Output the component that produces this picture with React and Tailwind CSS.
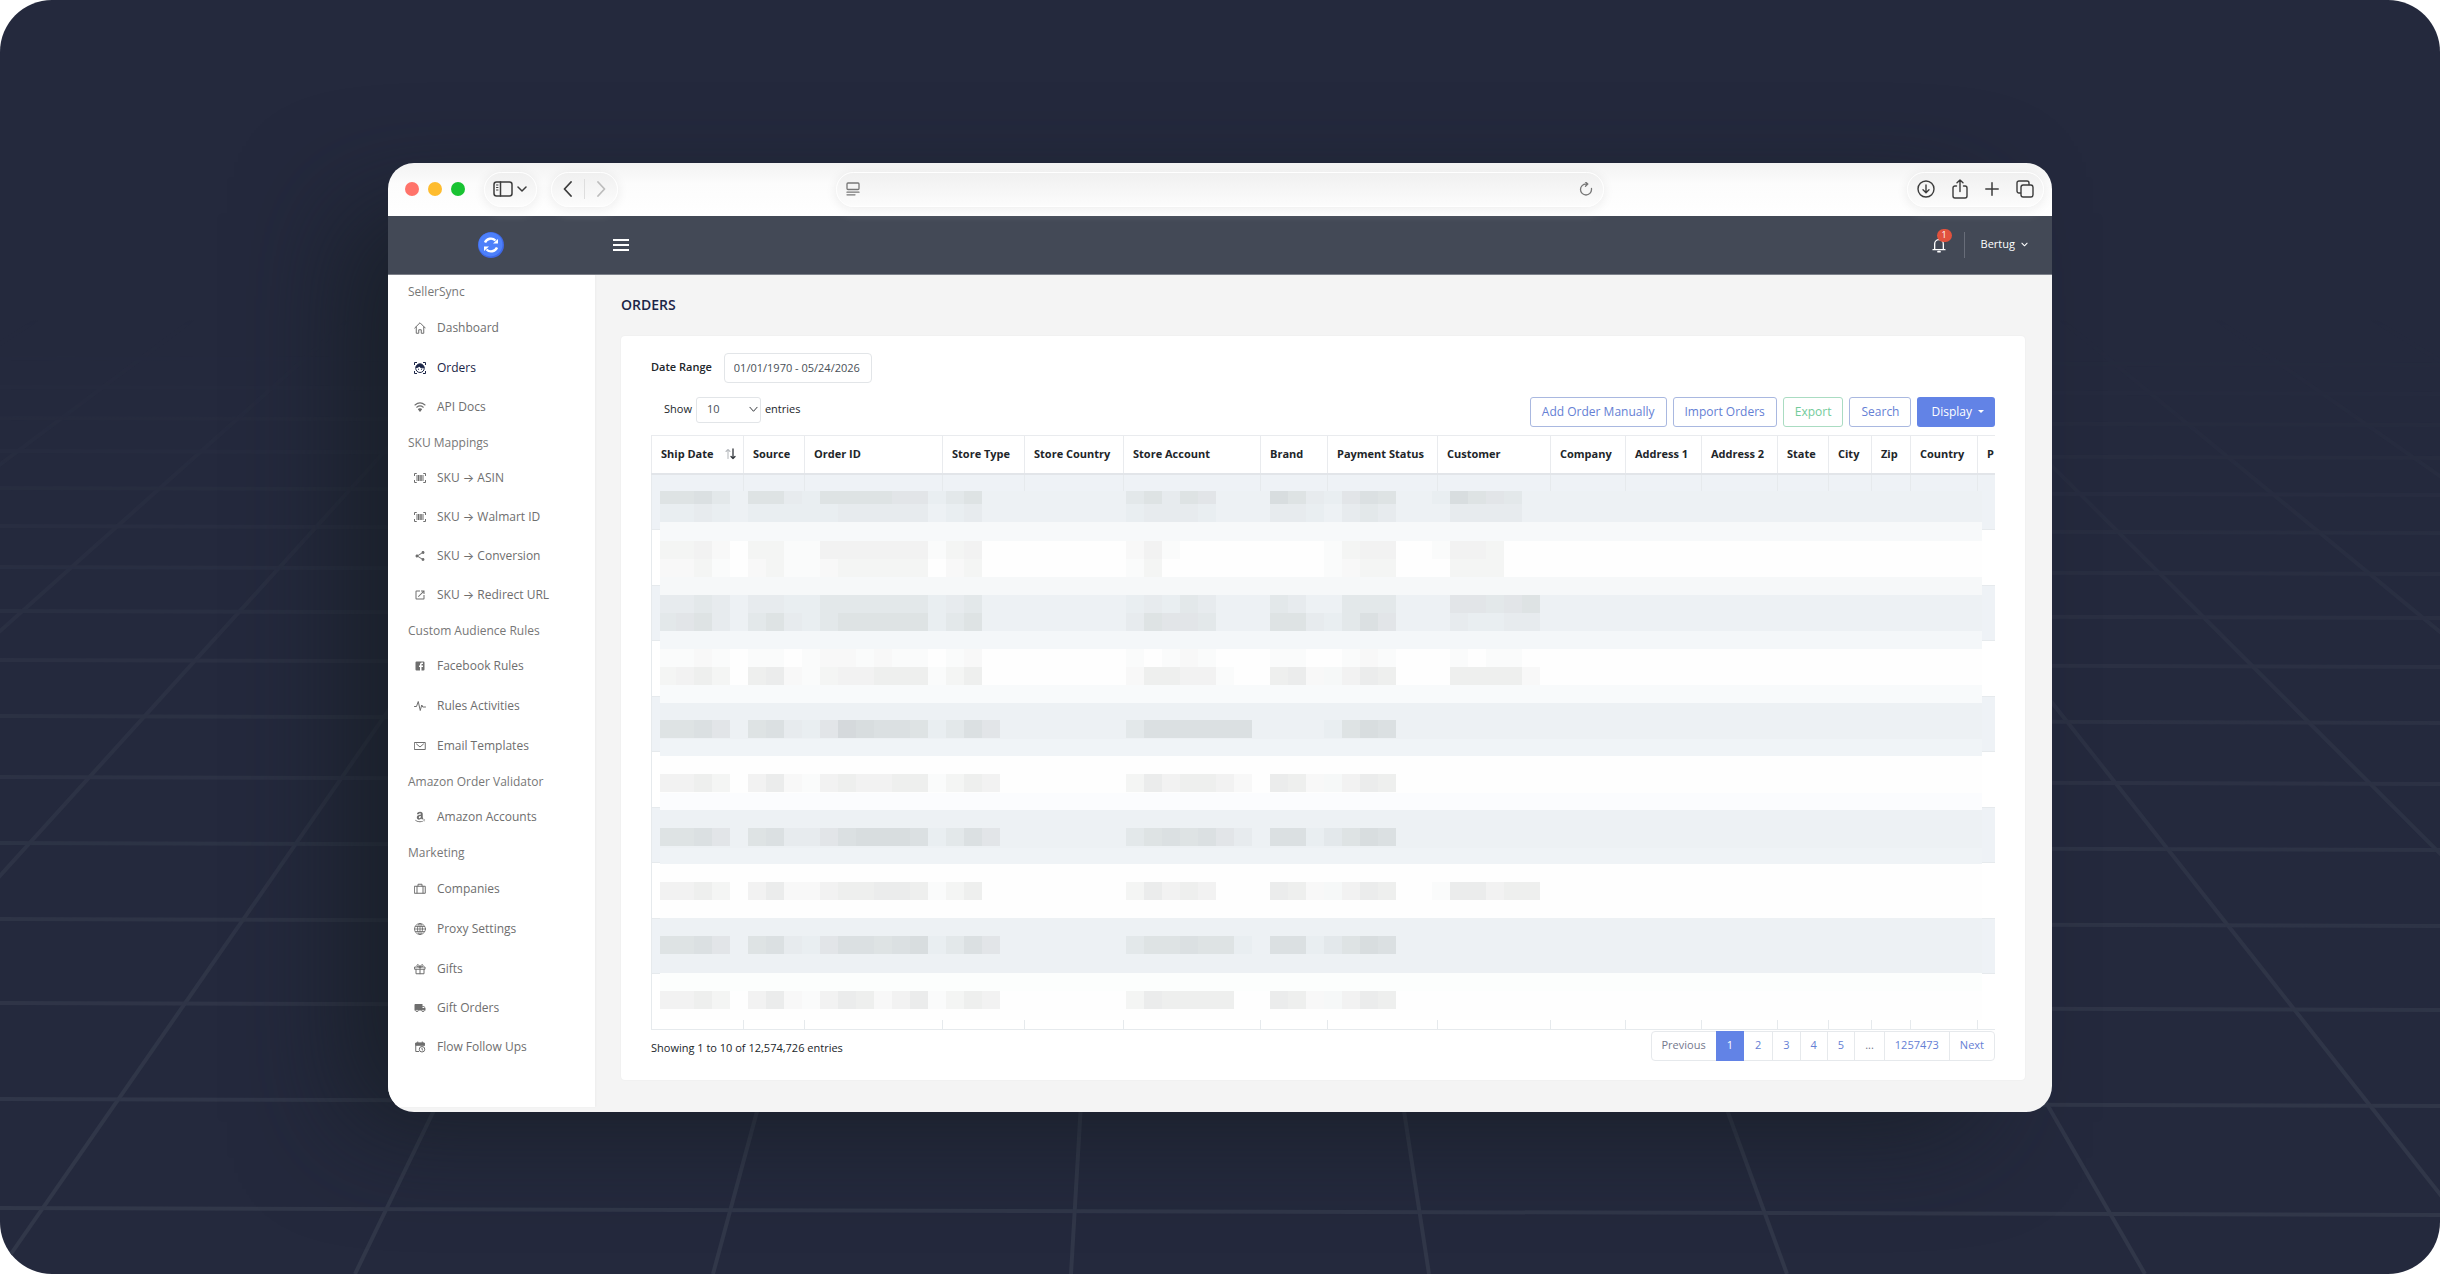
import { MdShare, MdOpenInNew, MdLocalShipping } from "react-icons/md";
import { FaAmazon } from "react-icons/fa";

function Icon({ children, className = "size-3", box = "0 0 24 24", width = 2, ...rest }) {
  return (
    <svg viewBox={box} className={className} fill="none" stroke="currentColor" strokeWidth={width} strokeLinecap="round" strokeLinejoin="round" aria-hidden="true" {...rest}>
      {children}
    </svg>
  );
}

/* Sidebar icons */
const Home = () => (
  <Icon>
    <path d="M1.500 12 12 1.500 22.500 12M4.500 10v12.500h5v-7h5v7h5V10" />
  </Icon>
);
const Face = () => (
  <Icon strokeLinecap="butt">
    <path d="M1 6V1h5M18 1h5v5M23 18v5h-5M6 23H1v-5" />
    <circle cx="12" cy="12.500" r="8.500" />
    <path d="M4 11C7 11 9 10 10.500 8.500c2 2.500 5 3.500 9.500 3C19 7 16 4 12 4S4.800 7 4 11Z" fill="currentColor" />
    <path d="M9 13.500v2M15 13.500v2" />
  </Icon>
);
const Wifi = () => (
  <Icon width={2.2}>
    <path d="M2 8C8 3 16 3 22 8M5.500 12.500c4-3.300 9-3.300 13 0" />
    <path d="m9 16.500 3 4 3-4c-2-1.300-4-1.300-6 0Z" fill="currentColor" />
  </Icon>
);
const Barcode = () => (
  <Icon strokeLinecap="butt">
    <path d="M5.500 3H1v5M18.500 3H23v5M23 16v5h-4.500M5.500 21H1v-5" />
    <path d="M6 6v12M18 6v12" />
    <path d="M9.500 6v12M14 6v12" strokeWidth="3" />
  </Icon>
);
const Facebook = () => (
  <Icon fill="currentColor" stroke="none">
    <path d="M5 3h14a2 2 0 0 1 2 2v14a2 2 0 0 1-2 2H5a2 2 0 0 1-2-2V5a2 2 0 0 1 2-2m13 2h-2.500A3.500 3.500 0 0 0 12 8.500V11h-2v3h2v7h3v-7h3v-3h-3V9a1 1 0 0 1 1-1h2V5Z" />
  </Icon>
);
const Pulse = () => (
  <Icon>
    <path d="M1 13h4l3.500-10 4 18 3-11 2 4H23" />
  </Icon>
);
const Mail = () => (
  <Icon>
    <path d="M1.500 5h21v14h-21zM5 8l7 6 7-6" />
  </Icon>
);
const Suitcase = () => (
  <Icon>
    <path d="M1.500 6.500h21v14h-21zM8 6V2.500h8V6M6 7v13M18 7v13" />
  </Icon>
);
const Globe = () => (
  <Icon width={1.7}>
    <circle cx="12" cy="12" r="11" />
    <ellipse cx="12" cy="12" rx="5" ry="11" />
    <path d="M1 12h22M12 1v22M3 7h18M3 17h18" />
  </Icon>
);
const Gift = () => (
  <Icon>
    <path d="M2 8h20v4.500H2zM4 12.500v9h16v-9M12 8v13.500M12 8C10 2 5.500 2 6 5.500 6.200 7 8 8 12 8Zm0 0c2-6 6.500-6 6-2.500C17.800 7 16 8 12 8Z" />
  </Icon>
);
const CalendarClock = () => (
  <Icon strokeLinecap="butt">
    <path d="M10 21H3.500V4.500h17V10M7.500 1v4M16.500 1v4" />
    <path d="M3.500 4h17v4.500h-17z" fill="currentColor" />
    <circle cx="16" cy="16.500" r="5.500" />
    <path d="M16 13.500v3.500l2 1.500" />
  </Icon>
);

const MENU = [
  { title: "SellerSync", items: [["Dashboard", Home, 1], ["Orders", Face, 1], ["API Docs", Wifi, 0]] },
  { title: "SKU Mappings", items: [["SKU → ASIN", Barcode, 0], ["SKU → Walmart ID", Barcode, 0], ["SKU → Conversion", MdShare, 0], ["SKU → Redirect URL", MdOpenInNew, 0]] },
  { title: "Custom Audience Rules", items: [["Facebook Rules", Facebook, 0], ["Rules Activities", Pulse, 1], ["Email Templates", Mail, 1]] },
  { title: "Amazon Order Validator", items: [["Amazon Accounts", FaAmazon, 0]] },
  { title: "Marketing", items: [["Companies", Suitcase, 1], ["Proxy Settings", Globe, 1], ["Gifts", Gift, 1], ["Gift Orders", MdLocalShipping, 0], ["Flow Follow Ups", CalendarClock, 0]] },
];

const COLUMNS = [
  ["Ship Date", 92], ["Source", 61], ["Order ID", 138], ["Store Type", 82], ["Store Country", 99], ["Store Account", 137], ["Brand", 67], ["Payment Status", 110], ["Customer", 113],
  ["Company", 75], ["Address 1", 76], ["Address 2", 76], ["State", 51], ["City", 43], ["Zip", 39], ["Country", 67], ["P", 80],
];

/* Redaction mosaic: background bands as [y, height, colour] */
const BANDS = [
  [0, 31, "#edf1f4"], [31, 19, "#f7f9fa"], [50, 36, "#fefefe"], [86, 18, "#f6f8f9"], [104, 36, "#edf1f4"], [140, 18, "#f4f7f9"],
  [158, 36, "#fefefe"], [194, 18, "#f8fafb"], [212, 36, "#edf1f4"], [248, 17, "#f0f4f7"], [265, 37, "#fefefe"], [302, 17, "#fbfcfe"],
  [319, 38, "#edf1f4"], [357, 16, "#eff3f6"], [373, 54, "#fefefe"], [427, 55, "#edf1f4"], [482, 18, "#fcfefd"], [500, 29, "#fefefe"],
];
/* Blurred cell contents: [y, height, { first tile: darkness of each tile }] */
const TILES = [
  [0, 13, { 0: "5563", 5: "5521", 9: "555544", 15: "1", 16: "35", 26: "35254", 34: "7521", 38: "465", 43: "1", 44: "7543" }],
  [13, 18, { 0: "1121", 5: "1111", 9: "122222", 16: "12", 26: "12221", 34: "2210", 38: "232", 44: "2222" }],
  [50, 18, { 0: "3342", 5: "3311", 9: "444444", 15: "1", 16: "34", 26: "241", 37: "1", 38: "344", 43: "1", 44: "443" }],
  [68, 18, { 0: "2231", 5: "2311", 9: "233333", 16: "23", 26: "13", 37: "1", 38: "233", 44: "333" }],
  [104, 18, { 0: "2232", 5: "2211", 9: "333333", 15: "1", 16: "23", 26: "12132", 34: "32", 38: "333", 44: "44345" }],
  [122, 18, { 0: "3452", 5: "3521", 9: "355555", 15: "1", 16: "35", 26: "25443", 34: "5521", 38: "364", 44: "21122" }],
  [158, 18, { 0: "1121", 5: "1101", 9: "221211", 16: "12", 26: "10121", 34: "1100", 38: "121", 44: "1011" }],
  [176, 18, { 0: "3453", 5: "5621", 9: "344555", 15: "1", 16: "35", 26: "255441", 34: "5621", 37: "1", 38: "465", 44: "55552" }],
  [229, 18, { 0: "5564", 5: "5621", 9: "487665", 15: "1", 16: "364", 26: "3666666", 37: "1", 38: "576" }],
  [283, 18, { 0: "4453", 5: "4621", 9: "454455", 15: "1", 16: "354", 26: "3645542", 34: "6521", 37: "1", 38: "465" }],
  [337, 18, { 0: "5564", 5: "5622", 9: "467776", 15: "1", 16: "364", 26: "3565642", 34: "6611", 37: "2", 38: "576" }],
  [391, 18, { 0: "4453", 5: "4622", 9: "455665", 15: "1", 16: "35", 26: "36454", 34: "6521", 37: "1", 38: "465", 43: "1", 44: "66455" }],
  [445, 18, { 0: "5564", 5: "5621", 9: "466567", 15: "1", 16: "364", 26: "3556551", 34: "6611", 37: "2", 38: "576" }],
  [500, 18, { 0: "4453", 5: "4621", 9: "465246", 15: "1", 16: "354", 26: "365555", 34: "6521", 37: "1", 38: "465" }],
];

function Mosaic() {
  return (
    <svg className="pointer-events-none absolute top-14 left-[9px] h-[529px] w-[1322px]" shapeRendering="crispEdges" aria-hidden="true">
      {BANDS.map(([y, h, fill]) => (
        <rect key={y} y={y} width="1322" height={h} fill={fill} />
      ))}
      {TILES.flatMap(([y, h, groups]) =>
        Object.entries(groups).flatMap(([start, levels]) =>
          [...levels].map((level, n) => (
            <rect key={`${y}-${start}-${n}`} x={(Number(start) + n) * 18 - 2} y={y} width="18" height={h} fill="#1c2420" opacity={Number(level) * 0.014} />
          )),
        ),
      )}
    </svg>
  );
}

/* Floor grid seen in perspective */
const HORIZONTALS = [358, 387, 418, 451, 488, 526, 567, 611, 660, 716, 777, 843, 919, 1003, 1099, 1208];
const RAYS = [-12, -11, -10, -9, -8, -7, -6, -5, -4, -3, -2, -1, 0, 1, 2, 3, 4, 5, 6, 7, 8, 9, 10, 11, 12, 13, 14, 15, 16, 17, 18];

function Backdrop() {
  return (
    <svg className="absolute inset-0 size-full" viewBox="0 0 2440 1274" preserveAspectRatio="none" aria-hidden="true">
      <defs>
        <linearGradient id="fade" x1="0" y1="0" x2="0" y2="1">
          <stop offset="0.250" stopColor="#fff" stopOpacity="0" />
          <stop offset="0.500" stopColor="#fff" stopOpacity="0.500" />
          <stop offset="0.900" stopColor="#fff" stopOpacity="1" />
        </linearGradient>
        <mask id="horizon" maskUnits="userSpaceOnUse" x="0" y="0" width="2440" height="1274">
          <rect width="2440" height="1274" fill="url(#fade)" />
        </mask>
      </defs>
      <g stroke="#313749" strokeWidth="4" mask="url(#horizon)">
        {HORIZONTALS.map((y) => (
          <path key={y} d={`M0 ${y}L2440 ${y + 7}`} />
        ))}
        {RAYS.map((n) => (
          <path key={n} d={`M1170 -415L${n * 358 - 3} 1274`} />
        ))}
      </g>
    </svg>
  );
}

const pill = "flex h-[35px] items-center rounded-full border border-white bg-linear-to-b from-[#f0f0f0] to-[#fcfcfc] shadow-[0_8px_10px_rgba(255,255,255,0.14),0_2px_12px_rgba(0,0,0,0.08)]";

function BrowserBar() {
  return (
    <div className="relative z-10 grid h-[53px] grid-cols-[1fr_768px_1fr] items-center rounded-t-[26px] bg-linear-to-b from-[#f3f3f3] via-[#fcfcfc] via-40% to-white text-[#3c3c3c]">
      <div className="flex items-center pl-[17px]">
        <div className="flex gap-[9px]">
          <span className="size-[14px] rounded-full bg-[#ff736a]" />
          <span className="size-[14px] rounded-full bg-[#febc2e]" />
          <span className="size-[14px] rounded-full bg-[#19c332]" />
        </div>
        <div className={`${pill} ml-[19px] w-[53px] gap-1 pl-2`}>
          <button type="button" aria-label="Show sidebar">
            <Icon box="0 0 20 16" className="h-4 w-5" width={1.5}>
              <rect x="1" y="1" width="18" height="14" rx="2.500" />
              <path d="M7.500 1v14" />
              <path d="M3.500 4h1.500M3.500 6.500h1.500M3.500 9h1.500" strokeWidth="1" />
            </Icon>
          </button>
          <button type="button" aria-label="Tab groups">
            <Icon box="0 0 10 10" className="size-[10px]" width={1.5}>
              <path d="m1 3 4 4 4-4" />
            </Icon>
          </button>
        </div>
        <div className={`${pill} ml-[14px] w-[67px] justify-center gap-3`}>
          <button type="button" aria-label="Back">
            <Icon box="0 0 9 16" className="h-4 w-[9px]" width={1.8}>
              <path d="M8 1 1.500 8 8 15" />
            </Icon>
          </button>
          <span className="h-5 w-px bg-[#dedede]" />
          <button type="button" aria-label="Forward" className="text-[#bdbdbd]">
            <Icon box="0 0 9 16" className="h-4 w-[9px]" width={1.8}>
              <path d="m1 1 6.500 7L1 15" />
            </Icon>
          </button>
        </div>
      </div>
      <div className={`${pill} justify-between pr-[10px] pl-[9px] text-[#777]`}>
        <Icon box="0 0 14 14" className="size-[14px]" width={1.3}>
          <rect x="1" y="1" width="12" height="6.500" rx="1" />
          <path d="M1 10.200h12M1 12.800h8" />
        </Icon>
        <button type="button" aria-label="Reload">
          <Icon box="0 0 14 14" className="size-[14px]" width={1.3}>
            <path d="M12.500 6.500v1a5.500 5.500 0 1 1-5.500-5.500h1.500M6.500 0l2.300 2-2.300 2.300" />
          </Icon>
        </button>
      </div>
      <div className={`${pill} mr-2 w-[137px] items-center justify-between justify-self-end px-[9px]`}>
        <button type="button" aria-label="Downloads">
          <Icon box="0 0 18 18" className="size-[18px]" width={1.4}>
            <circle cx="9" cy="9" r="8" />
            <path d="M9 5v7.500M6 9.800l3 3 3-3" />
          </Icon>
        </button>
        <button type="button" aria-label="Share">
          <Icon box="0 0 16 20" className="h-5 w-4" width={1.4}>
            <path d="M4.500 7H3a2 2 0 0 0-2 2v8a2 2 0 0 0 2 2h10a2 2 0 0 0 2-2V9a2 2 0 0 0-2-2h-1.500M8 12.500V1M5 3.800 8 1l3 2.800" />
          </Icon>
        </button>
        <button type="button" aria-label="New tab">
          <Icon box="0 0 14 14" className="size-[14px]" width={1.5}>
            <path d="M7 .8v12.400M.8 7h12.400" />
          </Icon>
        </button>
        <button type="button" aria-label="Tab overview">
          <Icon box="0 0 18 18" className="size-[18px]" width={1.4}>
            <rect x="5" y="5" width="12" height="12" rx="2.200" />
            <path d="M4.500 13H3a2 2 0 0 1-2-2V3a2 2 0 0 1 2-2h8a2 2 0 0 1 2 2v1.500" />
          </Icon>
        </button>
      </div>
    </div>
  );
}

function AppHeader() {
  return (
    <header className="flex h-[59px] items-center border-b border-[#7d818a] bg-[#434956] text-white">
      <a href="#home" aria-label="SellerSync" className="flex w-[206px] shrink-0 justify-center">
        <svg viewBox="0 0 26 26" className="size-[26px]" aria-hidden="true">
          <circle cx="13" cy="13" r="13" fill="#3f68e6" />
          <circle cx="12.500" cy="12.500" r="12" fill="#4d80fa" />
          <g fill="none" stroke="#fff" strokeWidth="2.400">
            <path d="M7 10.500A6.500 6.500 0 0 1 17.500 8.500M19 15.500A6.500 6.500 0 0 1 8.500 17.500" />
          </g>
          <path d="M20 7v4.500h-5zM6 19v-4.500h5z" fill="#fff" />
        </svg>
      </a>
      <button type="button" aria-label="Toggle menu" className="ml-[19px] flex w-4 flex-col gap-[3px]">
        <span className="h-[2px] bg-white" />
        <span className="h-[2px] bg-white" />
        <span className="h-[2px] bg-white" />
      </button>
      <div className="ml-auto flex items-center pr-6 text-[11px]">
        <button type="button" aria-label="Notifications" className="relative">
          <Icon className="size-4" width={2}>
            <path d="M3 19h18M5.500 19v-8.500a6.500 6.500 0 0 1 13 0V19M12 4V2.500" />
            <path d="M10.500 22h3" strokeWidth="2.500" />
          </Icon>
          <span className="absolute -top-2 left-[6px] flex h-[13px] w-[15px] items-center justify-center rounded-full bg-[#e1523d] text-[9px]">1</span>
        </button>
        <span className="mr-4 ml-[17px] h-[26px] w-px bg-[#686d79]" />
        <button type="button" className="flex items-center gap-[6px]">
          Bertug
          <Icon box="0 0 8 8" className="size-[7px]" width={1.2}>
            <path d="m1 2.500 3 3 3-3" />
          </Icon>
        </button>
      </div>
    </header>
  );
}

function Sidebar() {
  return (
    <nav className="mb-[5px] w-[207px] shrink-0 bg-white pt-px text-xs text-[#6e6e6e] shadow-[1px_0_2px_rgba(0,0,0,0.03)]">
      {MENU.map(({ title, items }) => (
        <section key={title}>
          <h2 className="flex h-8 items-center pl-5 text-[#777]">{title}</h2>
          <ul>
            {items.map(([label, Glyph, tall]) => (
              <li key={label}>
                <a href="#menu" className={`flex items-center gap-[11px] pl-[26px] ${tall ? "h-10" : "h-[39px]"} ${label === "Orders" ? "text-[#1b2547]" : ""}`}>
                  <Glyph className="size-3" />
                  {label}
                </a>
              </li>
            ))}
          </ul>
        </section>
      ))}
    </nav>
  );
}

function OrdersTable() {
  return (
    <div className="relative mt-2 overflow-hidden">
      <table className="w-[1406px] table-fixed border-collapse border border-[#e9ebee] text-[11px] text-[#212529]">
        <colgroup>
          {COLUMNS.map(([name, width]) => (
            <col key={name} style={{ width }} />
          ))}
        </colgroup>
        <thead>
          <tr className="h-[39px] border-b-2 border-[#e2e5e9]">
            {COLUMNS.map(([name]) => (
              <th key={name} scope="col" className="border-x border-[#e9ebee] pl-[9px] text-left font-bold whitespace-nowrap">
                {name === "Ship Date" ? (
                  <span className="flex items-center justify-between pr-[7px]">
                    {name}
                    <Icon box="0 0 11 12" className="h-3 w-[11px]" width={1.1}>
                      <path d="M3 10.500V1.500M1 3.500l2-2 2 2" stroke="#b9bcc0" />
                      <path d="M8 1v9.500M6 8.500l2 2 2-2" stroke="#33373c" strokeWidth="1.300" />
                    </Icon>
                  </span>
                ) : (
                  name
                )}
              </th>
            ))}
          </tr>
        </thead>
        <tbody>
          {Array.from({ length: 10 }, (_, row) => (
            <tr key={row} className={row % 2 ? "h-14" : "h-[55px] bg-[#eef2f6]"}>
              {COLUMNS.map(([name]) => (
                <td key={name} className="border border-[#e6eaed]" />
              ))}
            </tr>
          ))}
        </tbody>
      </table>
      <Mosaic />
    </div>
  );
}

const outline = "h-[30px] rounded-[3px] border px-[11px]";
const PAGES = ["2", "3", "4", "5"];
const pageCell = "flex h-full items-center border-l border-[#e6e9ec] px-[10px]";

function OrdersCard() {
  return (
    <section className="rounded-[4px] bg-white px-[30px] pt-[17px] pb-[19px] text-[11px] text-[#212529] shadow-[0_0_2px_rgba(0,0,0,0.06)]">
      <div className="flex items-center gap-3">
        <label htmlFor="range" className="font-semibold">Date Range</label>
        <input id="range" defaultValue="01/01/1970 - 05/24/2026" className="h-[30px] w-[148px] rounded-[4px] border border-[#e2e5e8] px-[9px] text-[#495057] outline-none" />
      </div>
      <div className="mt-[14px] flex items-start justify-between">
        <div className="flex items-center gap-1 pl-[13px]">
          <label htmlFor="length">Show</label>
          <span className="relative">
            <select id="length" defaultValue="10" className="block h-[26px] w-[65px] appearance-none rounded-[3px] border border-[#e2e5e8] bg-white pl-[10px] text-[#495057]">
              <option>10</option>
              <option>25</option>
              <option>50</option>
            </select>
            <Icon box="0 0 10 10" className="pointer-events-none absolute top-2 right-[3px] size-[9px]" width={1}>
              <path d="m1 2.500 4 4.500 4-4.500" />
            </Icon>
          </span>
          <span>entries</span>
        </div>
        <div className="flex gap-[6px] text-xs text-[#6580d4]">
          <button type="button" className={`${outline} border-[#a9b8e0]`}>Add Order Manually</button>
          <button type="button" className={`${outline} border-[#a9b8e0]`}>Import Orders</button>
          <button type="button" className={`${outline} border-[#aadcc2] text-[#73cb9b]`}>Export</button>
          <button type="button" className={`${outline} border-[#a9b8e0]`}>Search</button>
          <button type="button" className="flex h-[30px] items-center gap-[6px] rounded-[3px] bg-[#6283e6] pr-[11px] pl-[14px] text-white">
            Display
            <span className="border-x-[3px] border-t-[3px] border-x-transparent border-t-white" />
          </button>
        </div>
      </div>
      <OrdersTable />
      <div className="flex items-start justify-between">
        <p className="mt-[10px]">Showing 1 to 10 of 12,574,726 entries</p>
        <ul className="mt-px flex h-[30px] rounded-[4px] border border-[#e6e9ec] text-[#6580d4]">
          <li className="flex items-center px-[10px] text-[#74788d]">
            <button type="button" disabled>Previous</button>
          </li>
          <li className="-my-px flex">
            <a href="#p1" aria-current="page" className="flex items-center bg-[#6283e6] px-[11px] text-white">1</a>
          </li>
          {PAGES.map((page, n) => (
            <li key={page}>
              <a href="#page" className={n ? pageCell : "flex h-full items-center px-[11px]"}>{page}</a>
            </li>
          ))}
          <li className={`${pageCell} text-[#74788d]`}>...</li>
          <li>
            <a href="#last" className={pageCell}>1257473</a>
          </li>
          <li>
            <a href="#next" className={pageCell}>Next</a>
          </li>
        </ul>
      </div>
    </section>
  );
}

export default function App() {
  return (
    <div className="bg-white font-['Open_Sans','Inter',sans-serif]">
      <div className="relative flex min-h-screen flex-col justify-center overflow-hidden rounded-[52px] bg-[#24293d] px-[388px]">
        <Backdrop />
        <div className="relative rounded-[26px] shadow-[-60px_30px_110px_-20px_rgba(22,28,34,0.75)]">
          <BrowserBar />
          <div className="overflow-hidden rounded-b-[26px] bg-[#f4f4f4]">
            <AppHeader />
            <div className="flex">
              <Sidebar />
              <main className="min-w-0 flex-1 pr-[27px] pb-8 pl-[26px]">
                <h1 className="flex h-[61px] items-center text-sm font-semibold text-[#1b2547]">ORDERS</h1>
                <OrdersCard />
              </main>
            </div>
          </div>
        </div>
      </div>
    </div>
  );
}
